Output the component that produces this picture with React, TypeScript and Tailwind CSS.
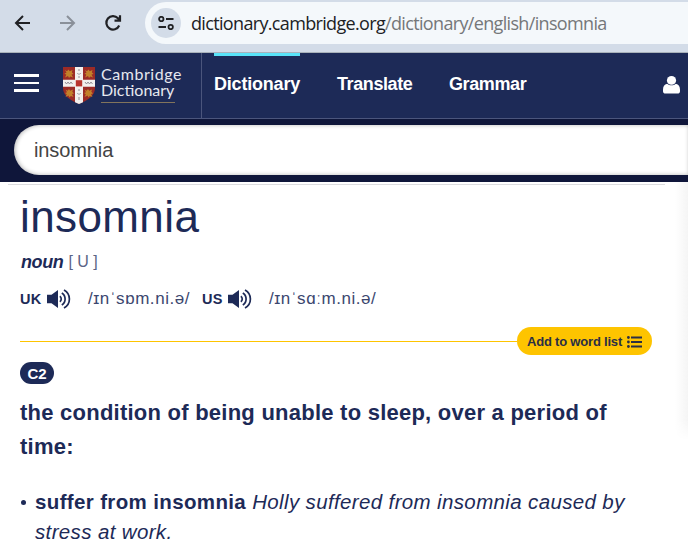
import React from "react";

const Speaker = () => (
  <svg width="24" height="20" viewBox="0 0 24 20" fill="none" className="shrink-0">
    <path d="M0 5.800h4.500L11 1v18l-6.500-4.800H0z" fill="#1d2a57" />
    <path d="M12.800 7.200c1.900 1.200 1.900 4.400 0 5.600M14.800 4c4.400 2.700 4.400 9.300 0 12M17 1c7.200 4 7.200 14 0 18" stroke="#1d2a57" strokeWidth="1.700" />
  </svg>
);

const Lion = ({ x, y }: { x: number; y: number }) => (
  <path
    transform={`translate(${x} ${y})`}
    d="M.5 1l2 1.200L4 .5l1.200 1.800L8 1 7.300 3.300 9 5 7 5.600 8.500 8.500 5.800 7.500 4.500 9 3.500 7 .5 8.500 1.800 5.800 0 4.500 2 3.800z"
    fill="#c9902a"
    opacity=".85"
  />
);

const Shield = () => (
  <svg width="32" height="37" viewBox="0 0 32 37" className="shrink-0">
    <path d="M0 0h32v21c0 8-7 12-16 16C7 33 0 29 0 21z" fill="#9c2b27" />
    <Lion x={1.500} y={2} />
    <Lion x={21.500} y={2} />
    <Lion x={2} y={21.500} />
    <Lion x={21} y={21.500} />
    <path d="M12 0h8v35.200L16 37l-4-1.800zM0 12.800h32v7H0z" fill="#f3f0ee" />
    <path d="M12.800 13.200h6.400v6.200h-6.400z" fill="#b8332d" />
    <path
      d="M16 2v2M14.500 6l1 1.500M17.500 6l-1 1.500M16 9v2M16 22v2M14.500 26l1 1.500M17.500 26l-1 1.500M16 30v3M2 15l1.500 2L5 15l1.500 2L8 15l1.500 2M22 15l1.500 2 1.500-2 1.500 2 1.500-2 1.500 2"
      stroke="#8b868d"
      strokeWidth=".9"
      fill="none"
    />
  </svg>
);

const BrowserBar = () => (
  <div className="flex h-[53px] items-start border-b border-[#a9b2ba] bg-[#d3dce8] pl-[14px] pt-[2px]">
    <svg width="17" height="42" viewBox="0 0 17 42" fill="none" stroke="#202124" strokeWidth="2">
      <path d="M16 21H2.500M9 14l-7 7 7 7" />
    </svg>
    <svg width="17" height="42" viewBox="0 0 17 42" fill="none" stroke="#8a9099" strokeWidth="2" className="ml-[28px]">
      <path d="M1 21h13.500M8 14l7 7-7 7" />
    </svg>
    <svg width="18" height="42" viewBox="0 0 18 42" fill="none" stroke="#202124" strokeWidth="2.200" className="ml-[28px]">
      <path d="M15.200 23.500a6.700 6.700 0 1 1-1.200-7.200l2 2.200M16 13.200v5.500h-5.500" />
    </svg>
    <div className="ml-[23px] flex h-[42px] flex-1 items-center rounded-l-full bg-[#f4f8fb] pl-[6px]">
      <div className="flex size-[30px] items-center justify-center rounded-full bg-[#d3dce8]">
        <svg width="16" height="14" viewBox="0 0 16 14" fill="none" stroke="#202124" strokeWidth="1.800">
          <circle cx="3.300" cy="3" r="2.200" />
          <path d="M8 3h7.500M.5 11H8" />
          <circle cx="12.700" cy="11" r="2.200" />
        </svg>
      </div>
      <div className="ml-[10px] whitespace-nowrap font-['Open_Sans',sans-serif] text-[18px] leading-[42px] tracking-[-0.660px] text-[#202124]">
        dictionary.cambridge.org<span className="text-[#757779]">/dictionary/english/insomnia</span>
      </div>
    </div>
  </div>
);

const Nav = () => (
  <nav className="flex h-[66px] border-b border-[#4b557c] bg-[#1d2a57] text-white">
    <div className="flex w-[202px] shrink-0 items-start border-r border-[#4b557c]">
      <div className="ml-[14px] mt-[21px] flex w-[25px] flex-col gap-[5px]">
        <span className="h-[3px] bg-white" />
        <span className="h-[2px] bg-white" />
        <span className="h-[3px] bg-white" />
      </div>
      <div className="ml-[24px] mt-[14px]"><Shield /></div>
      <div className="ml-[6px] mt-[13px] font-['Lato',sans-serif] text-[16px] leading-[16px] text-[#e6e8ef]">
        <div className="tracking-[0.550px]">Cambridge</div>
        <div className="w-[74px] whitespace-nowrap border-b border-[#82745c] pb-[4px]">Dictionary</div>
      </div>
    </div>
    <div className="flex flex-1 pl-[12px] text-[18px] font-bold leading-[56px] tracking-[-0.400px]">
      <div className="h-[65px] w-[86px] border-t-[3px] border-[#59e3f8] tracking-[-0.200px]">Dictionary</div>
      <div className="ml-[37px] w-[76px] pt-[3px]">Translate</div>
      <div className="ml-[36px] pt-[3px] tracking-[-0.400px]">Grammar</div>
      <svg width="17" height="18" viewBox="0 0 17 19" fill="white" preserveAspectRatio="none" className="ml-auto mr-[8px] mt-[23px]">
        <path d="M4.200 8.200C1.300 8.600 0 11 0 14.500V16c0 1.500 1 2.500 2.500 2.500h12c1.500 0 2.500-1 2.500-2.500v-1.500c0-3.500-1.300-5.900-4.200-6.300-2.200 2.200-6.400 2.200-8.600 0z" />
        <circle cx="8.500" cy="4.700" r="4.600" />
      </svg>
    </div>
  </nav>
);

export default function App() {
  return (
    <div className="h-[554px] w-[688px] overflow-hidden bg-white font-['Liberation_Sans',Arial,sans-serif] text-[#1d2a57]">
      <BrowserBar />
      <Nav />
      <div className="h-[63px] bg-[#0f163a] pl-[14px] pt-[6px]">
        <div className="h-[50px] whitespace-nowrap rounded-l-full bg-white pl-[20px] text-[20px] leading-[50px] tracking-[-0.100px] text-[#444] shadow-[inset_1px_0_4px_rgba(0,0,0,0.300)]">
          insomnia
        </div>
      </div>
      <div className="flex h-[372px]">
        <main className="w-[665px] pt-[2px]">
          <div className="ml-[8px] h-px bg-[#dcdcdf]" />
          <div className="pl-[20px]">
            <h1 className="h-[64px] whitespace-nowrap text-[44px] leading-[64px] tracking-[0.400px]">insomnia</h1>
            <div className="mt-[2px] flex h-[22px] items-center whitespace-nowrap leading-[22px]">
              <span className="pl-px text-[18px] font-bold italic tracking-[-0.400px]">noun</span>
              <span className="ml-[5px] text-[16px] text-[#5b6486]">[ U ]</span>
            </div>
            <div className="mt-[14px] flex h-[24px] items-center whitespace-nowrap leading-[24px]">
              <span className="w-[27px] text-[14.500px] font-bold tracking-[0.200px]">UK</span>
              <Speaker />
              <span className="ml-[17px] w-[114px] text-[17px] tracking-[0.550px] text-[#3c476f]">/ɪnˈsɒm.ni.ə/</span>
              <span className="w-[26px] text-[14.500px] font-bold tracking-[0.200px]">US</span>
              <Speaker />
              <span className="ml-[17px] text-[17px] tracking-[0.550px] text-[#3c476f]">/ɪnˈsɑːm.ni.ə/</span>
            </div>
            <div className="mt-[16px] flex h-[29px] w-[632px] items-start">
              <div className="mt-[14px] h-px flex-1 bg-[#fec400]" />
              <div className="flex h-[28px] w-[135px] items-center rounded-full bg-[#fec400] pl-[10px] text-[13px] font-bold tracking-[-0.200px] text-[#2b2f45]">
                <span className="whitespace-nowrap pt-px">Add to word list</span>
                <svg width="15" height="12" viewBox="0 0 15 12" fill="#2b2f45" className="ml-auto mr-[10px] mt-px shrink-0">
                  <path d="M4 .5h11v2H4zM4 5h11v2H4zM4 9.500h11v2H4z" />
                  <circle cx="1.400" cy="1.500" r="1.400" />
                  <circle cx="1.400" cy="6" r="1.400" />
                  <circle cx="1.400" cy="10.500" r="1.400" />
                </svg>
              </div>
            </div>
            <div className="mt-[6px] flex h-[22px] w-[34px] items-center justify-center rounded-full bg-[#1d2a57] pt-[2px] text-[15px] font-bold text-white">C2</div>
            <p className="mt-[12px] whitespace-nowrap text-[22px] font-bold leading-[34px] tracking-[0.240px]">
              the condition of being unable to sleep, over a period of<br />time:
            </p>
            <div className="mt-[23px] flex text-[20.500px] leading-[30px] tracking-[0.360px]">
              <span className="flex w-[15px] shrink-0 items-start pl-px pt-[13px]"><span className="size-[5px] rounded-full bg-[#1d2a57]" /></span>
              <p className="whitespace-nowrap">
                <b>suffer from insomnia</b> <i>Holly suffered from insomnia caused by<br />stress at work.</i>
              </p>
            </div>
          </div>
        </main>
        <div className="ml-[10px] h-[258px] w-[13px] bg-gradient-to-r from-white to-[#f5f5f5] [mask-image:linear-gradient(to_top,transparent,black_20px)]" />
      </div>
    </div>
  );
}
